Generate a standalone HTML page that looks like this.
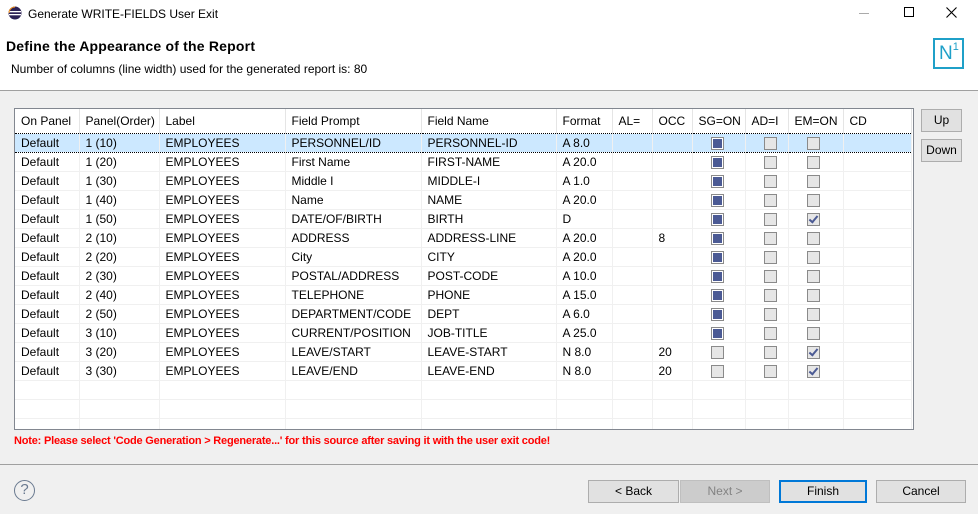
<!DOCTYPE html><html><head><style>
*{margin:0;padding:0;box-sizing:border-box}
body{width:978px;height:514px;position:relative;background:#f0f0f0;font-family:"Liberation Sans",sans-serif;font-size:12px;color:#000;overflow:hidden}
.a{position:absolute}
#top{left:0;top:0;width:978px;height:91px;background:#fff;border-bottom:1px solid #a0a0a0}
#wrap{position:absolute;left:14px;top:108px;width:900px;height:322px;border:1px solid #828790;background:#fff;overflow:hidden}
table{border-collapse:collapse;table-layout:fixed;position:absolute;left:0;top:0;background:#fff}
td{height:19px;border-right:1px solid #f0f0f0;border-bottom:1px solid #f0f0f0;padding:0 0 0 6px;white-space:nowrap;overflow:hidden;font-size:12px}
tr.h td{height:24px;border-right:1px solid #e5e5e5;border-bottom:none}
tr.s td{background:#cce8ff;border-top:1px dotted #000;border-bottom:1px dotted #000}
.cb{display:inline-block;width:13px;height:13px;border:1px solid #8a8a8a;background:#e6e6e6;vertical-align:middle;margin-left:12px;position:relative}
.cb.f{background:#4b5a94;box-shadow:inset 0 0 0 1px #fff;border-color:#8a8a8a}
.cb.k::after{content:"";position:absolute;left:3px;top:0px;width:3px;height:7px;border:solid #4b5a94;border-width:0 2px 2px 0;transform:rotate(40deg)}
.btn{position:absolute;height:23px;border:1px solid #adadad;background:#e1e1e1;text-align:center;line-height:21px;font-size:12px}
</style></head><body>
<div id="top" class="a"></div>
<svg class="a" style="left:8px;top:6px" width="14" height="14"><circle cx="7" cy="7" r="6.5" fill="#2c2255"/><rect x="1" y="5" width="12" height="1.3" fill="#fff"/><rect x="1" y="8" width="12" height="1.3" fill="#fff"/><path d="M1 7 A6 6 0 0 1 7 1" stroke="#f7941e" stroke-width="1" fill="none"/></svg>
<div class="a" style="left:28px;top:7px;font-size:12px">Generate WRITE-FIELDS User Exit</div>
<div class="a" style="left:859px;top:13px;width:10px;height:1px;background:#aaa"></div>
<div class="a" style="left:904px;top:7px;width:10px;height:10px;border:1px solid #000"></div>
<svg class="a" style="left:946px;top:7px" width="11" height="11"><path d="M0.5 0.5L10.5 10.5M10.5 0.5L0.5 10.5" stroke="#000" stroke-width="1.1"/></svg>
<div class="a" style="left:6px;top:38px;font-size:14px;font-weight:bold;letter-spacing:0.2px">Define the Appearance of the Report</div>
<div class="a" style="left:11px;top:62px">Number of columns (line width) used for the generated report is: 80</div>
<div class="a" style="left:933px;top:38px;width:31px;height:31px;border:2px solid #1fa0c8;color:#1fa0c8;font-size:19px;line-height:27px;padding-left:4px">N<span style="font-size:11px;vertical-align:top;position:relative;top:-6px">1</span></div>
<div id="wrap">
<table>
<colgroup><col style="width:64px"><col style="width:80px"><col style="width:126px"><col style="width:136px"><col style="width:135px"><col style="width:56px"><col style="width:40px"><col style="width:40px"><col style="width:53px"><col style="width:43px"><col style="width:55px"><col style="width:68px"></colgroup>
<tr class="h"><td>On Panel</td><td>Panel(Order)</td><td>Label</td><td>Field Prompt</td><td>Field Name</td><td>Format</td><td>AL=</td><td>OCC</td><td>SG=ON</td><td>AD=I</td><td>EM=ON</td><td>CD</td></tr>
<tr class="s"><td>Default</td><td>1 (10)</td><td>EMPLOYEES</td><td>PERSONNEL/ID</td><td>PERSONNEL-ID</td><td>A 8.0</td><td></td><td></td><td><span class="cb f"></span></td><td><span class="cb"></span></td><td><span class="cb"></span></td><td></td></tr>
<tr><td>Default</td><td>1 (20)</td><td>EMPLOYEES</td><td>First Name</td><td>FIRST-NAME</td><td>A 20.0</td><td></td><td></td><td><span class="cb f"></span></td><td><span class="cb"></span></td><td><span class="cb"></span></td><td></td></tr>
<tr><td>Default</td><td>1 (30)</td><td>EMPLOYEES</td><td>Middle I</td><td>MIDDLE-I</td><td>A 1.0</td><td></td><td></td><td><span class="cb f"></span></td><td><span class="cb"></span></td><td><span class="cb"></span></td><td></td></tr>
<tr><td>Default</td><td>1 (40)</td><td>EMPLOYEES</td><td>Name</td><td>NAME</td><td>A 20.0</td><td></td><td></td><td><span class="cb f"></span></td><td><span class="cb"></span></td><td><span class="cb"></span></td><td></td></tr>
<tr><td>Default</td><td>1 (50)</td><td>EMPLOYEES</td><td>DATE/OF/BIRTH</td><td>BIRTH</td><td>D</td><td></td><td></td><td><span class="cb f"></span></td><td><span class="cb"></span></td><td><span class="cb k"></span></td><td></td></tr>
<tr><td>Default</td><td>2 (10)</td><td>EMPLOYEES</td><td>ADDRESS</td><td>ADDRESS-LINE</td><td>A 20.0</td><td></td><td>8</td><td><span class="cb f"></span></td><td><span class="cb"></span></td><td><span class="cb"></span></td><td></td></tr>
<tr><td>Default</td><td>2 (20)</td><td>EMPLOYEES</td><td>City</td><td>CITY</td><td>A 20.0</td><td></td><td></td><td><span class="cb f"></span></td><td><span class="cb"></span></td><td><span class="cb"></span></td><td></td></tr>
<tr><td>Default</td><td>2 (30)</td><td>EMPLOYEES</td><td>POSTAL/ADDRESS</td><td>POST-CODE</td><td>A 10.0</td><td></td><td></td><td><span class="cb f"></span></td><td><span class="cb"></span></td><td><span class="cb"></span></td><td></td></tr>
<tr><td>Default</td><td>2 (40)</td><td>EMPLOYEES</td><td>TELEPHONE</td><td>PHONE</td><td>A 15.0</td><td></td><td></td><td><span class="cb f"></span></td><td><span class="cb"></span></td><td><span class="cb"></span></td><td></td></tr>
<tr><td>Default</td><td>2 (50)</td><td>EMPLOYEES</td><td>DEPARTMENT/CODE</td><td>DEPT</td><td>A 6.0</td><td></td><td></td><td><span class="cb f"></span></td><td><span class="cb"></span></td><td><span class="cb"></span></td><td></td></tr>
<tr><td>Default</td><td>3 (10)</td><td>EMPLOYEES</td><td>CURRENT/POSITION</td><td>JOB-TITLE</td><td>A 25.0</td><td></td><td></td><td><span class="cb f"></span></td><td><span class="cb"></span></td><td><span class="cb"></span></td><td></td></tr>
<tr><td>Default</td><td>3 (20)</td><td>EMPLOYEES</td><td>LEAVE/START</td><td>LEAVE-START</td><td>N 8.0</td><td></td><td>20</td><td><span class="cb"></span></td><td><span class="cb"></span></td><td><span class="cb k"></span></td><td></td></tr>
<tr><td>Default</td><td>3 (30)</td><td>EMPLOYEES</td><td>LEAVE/END</td><td>LEAVE-END</td><td>N 8.0</td><td></td><td>20</td><td><span class="cb"></span></td><td><span class="cb"></span></td><td><span class="cb k"></span></td><td></td></tr>
<tr><td></td><td></td><td></td><td></td><td></td><td></td><td></td><td></td><td></td><td></td><td></td><td></td></tr>
<tr><td></td><td></td><td></td><td></td><td></td><td></td><td></td><td></td><td></td><td></td><td></td><td></td></tr>
<tr><td></td><td></td><td></td><td></td><td></td><td></td><td></td><td></td><td></td><td></td><td></td><td></td></tr>
</table>
</div>
<div class="btn" style="left:921px;top:109px;width:41px">Up</div>
<div class="btn" style="left:921px;top:139px;width:41px">Down</div>
<div class="a" style="left:14px;top:435px;color:#f00;font-weight:bold;font-size:11px;letter-spacing:-0.2px">Note: Please select 'Code Generation &gt; Regenerate...' for this source after saving it with the user exit code!</div>
<div class="a" style="left:0;top:464px;width:978px;height:1px;background:#a0a0a0"></div>
<div class="a" style="left:14px;top:480px;width:21px;height:21px;border:1.5px solid #6a7a90;border-radius:50%;color:#6a7a90;font-size:15px;text-align:center;line-height:18px">?</div>
<div class="btn" style="left:588px;top:480px;width:91px">&lt; Back</div>
<div class="btn" style="left:680px;top:480px;width:90px;background:#ccc;border-color:#bfbfbf;color:#838383">Next &gt;</div>
<div class="btn" style="left:779px;top:480px;width:88px;border:2px solid #0078d7;line-height:19px">Finish</div>
<div class="btn" style="left:876px;top:480px;width:90px">Cancel</div>
</body></html>
